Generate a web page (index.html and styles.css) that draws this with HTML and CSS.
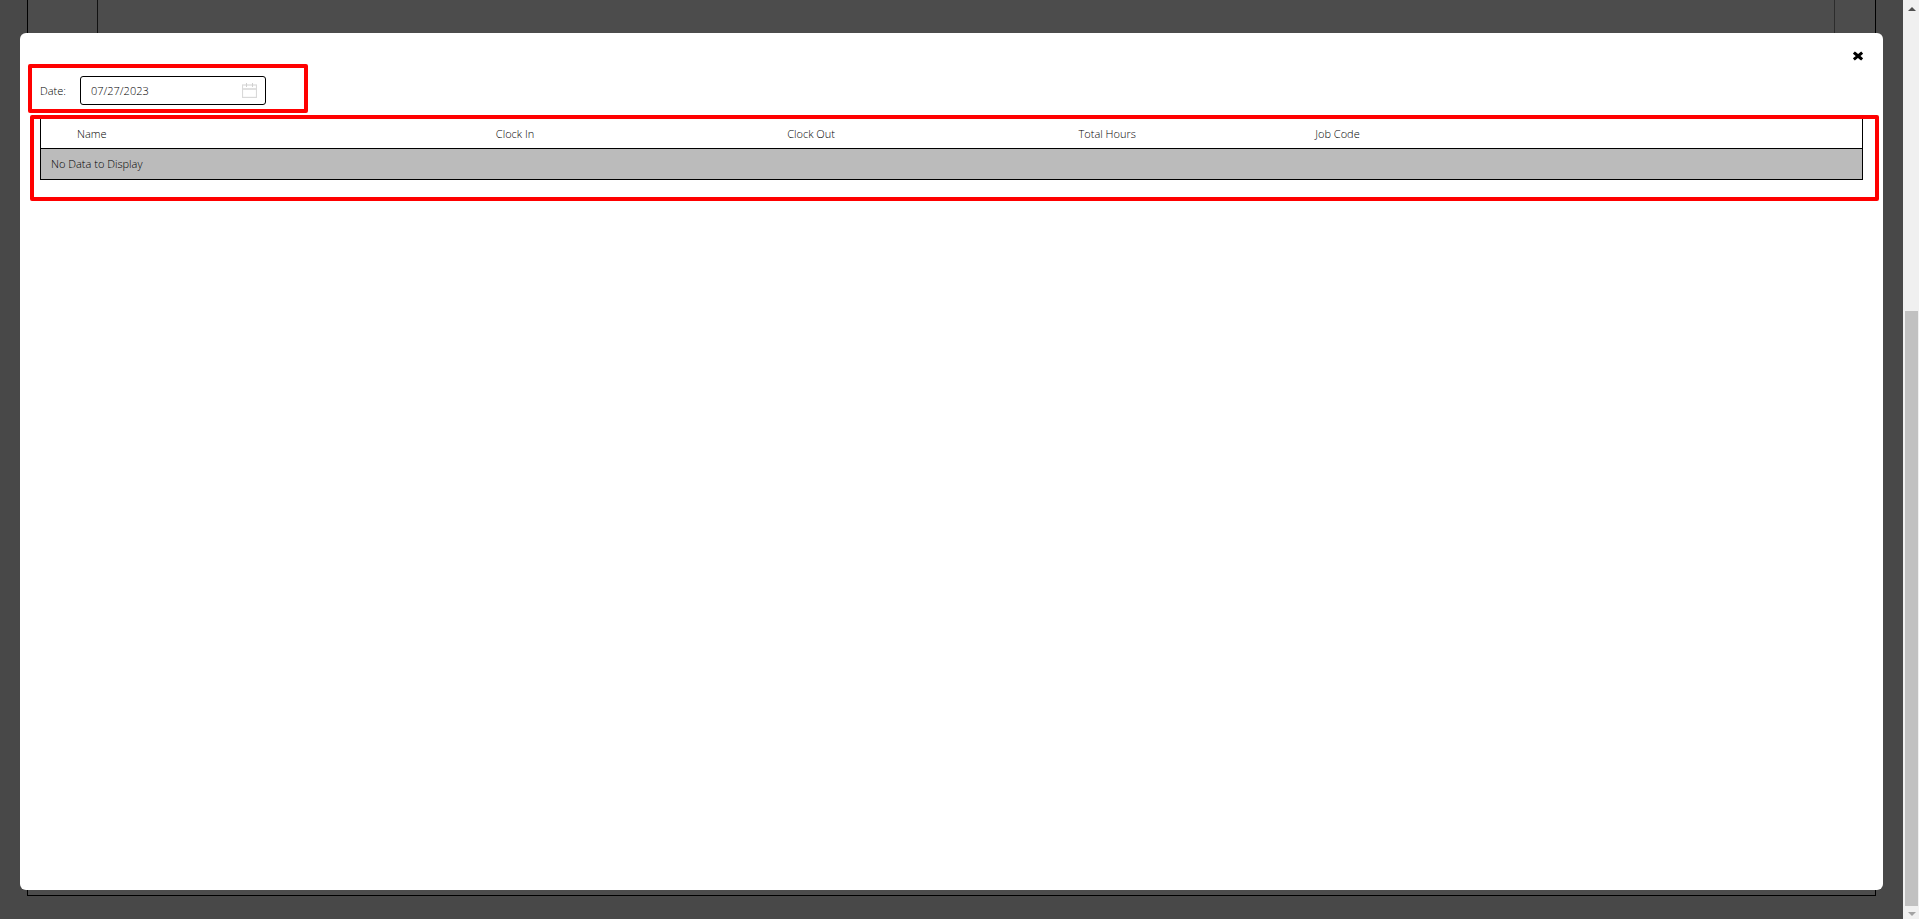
FILE: index.html
```html
<!DOCTYPE html>
<html lang="en">
<head>
  <meta charset="UTF-8">
  <title>Time Clock</title>
  <link rel="stylesheet" href="styles.css">
</head>
<body>
  <div class="page">
    <div class="panel">
      <div class="panel-column"></div>
    </div>

    <div class="modal" role="dialog" aria-label="Time Clock">
      <div class="modal-header">
        <button class="close-button" type="button" aria-label="Close">
          <svg viewBox="0 0 10 10" width="10" height="10">
            <path d="M2 2.5L8 7.5M8 2.5L2 7.5" fill="none" stroke="#000" stroke-width="3" stroke-linecap="square" />
          </svg>
        </button>
      </div>

      <div class="date-box">
        <label for="date">Date:</label>
        <div class="date-field">
          <input type="text" id="date" name="date" value="07/27/2023">
          <svg viewBox="0 0 15 15" width="15" height="15">
            <rect x="0.5" y="2" width="14" height="12.4" fill="none" stroke="#d9d9d9" stroke-width="1.2" />
            <path d="M0 6H15" stroke="#d9d9d9" stroke-width="1.6" />
            <path d="M4.5 0V4M10.5 0V4" stroke="#d0d0d0" />
          </svg>
        </div>
      </div>

      <div class="table-box">
        <table>
          <thead>
            <tr>
              <th class="col-select"></th>
              <th class="col-name">Name</th>
              <th class="col-clock">Clock In</th>
              <th class="col-clock">Clock Out</th>
              <th class="col-hours">Total Hours</th>
              <th>Job Code</th>
            </tr>
          </thead>
          <tbody>
            <tr>
              <td colspan="6">No Data to Display</td>
            </tr>
          </tbody>
        </table>
      </div>
    </div>
  </div>

  <div class="scrollbar">
    <div class="arrow arrow-up"></div>
    <div class="thumb"></div>
    <div class="arrow arrow-down"></div>
  </div>
</body>
</html>
```
FILE: styles.css
```css
* {
  box-sizing: border-box;
}

body {
  margin: 0;
  height: 100vh;
  display: flex;
  font-family: "Open Sans", sans-serif;
  font-size: 11px;
  font-weight: 300;
  line-height: 16px;
  color: #000;
  background-color: #484848;
  overflow: hidden;
}

.page {
  position: relative;
  flex: 1;
  display: flex;
  padding: 0 27px 23px;
}

.panel {
  flex: 1;
  display: flex;
  padding: 0 40px 20px 69px;
  border: 1px solid #000;
  border-top: none;
  background-color: #4c4c4c;
}

.panel-column {
  flex: 1;
  border-left: 1px solid #111;
  border-right: 1px solid #2c2c2c;
}

.modal {
  position: absolute;
  top: 33px;
  right: 20px;
  bottom: 29px;
  left: 20px;
  border-radius: 6px;
  background-color: #fff;
}

.modal-header {
  display: flex;
  justify-content: flex-end;
  padding: 18px 20px 3px;
}

.close-button {
  display: block;
  padding: 0;
  border: none;
  background: none;
  cursor: pointer;
}

.close-button svg {
  display: block;
}

.date-box {
  display: flex;
  align-items: center;
  width: 280px;
  margin-left: 8px;
  padding: 8px 8px 4px;
  border: 4px solid #f00;
  border-radius: 2px;
}

.date-box label {
  width: 40px;
}

.date-field {
  display: flex;
  align-items: center;
  width: 186px;
  height: 29px;
  padding: 0 8px 0 10px;
  border: 1px solid #000;
  border-radius: 3px;
}

.date-field input {
  flex: 1;
  min-width: 0;
  padding: 0;
  border: none;
  outline: none;
  font: inherit;
  color: #000;
  background: none;
}

.table-box {
  margin: 2px 4px 0 10px;
  padding: 0 12px 17px 6px;
  border: 4px solid #f00;
  border-radius: 2px;
}

table {
  width: 100%;
  table-layout: fixed;
  border: 1px solid #000;
  border-top: none;
  border-spacing: 0;
}

th,
td {
  padding: 0 10px;
  text-align: left;
  font-weight: 300;
}

th {
  height: 30px;
  border-bottom: 1px solid #000;
}

td {
  height: 30px;
  background-color: #bbb;
}

.col-select {
  width: 26px;
}

.col-name {
  width: 23%;
}

.col-clock {
  width: 16%;
}

.col-hours {
  width: 13%;
}

.scrollbar {
  display: flex;
  flex-direction: column;
  align-items: center;
  justify-content: space-between;
  width: 16px;
  padding: 7px 1px 3px 2px;
  background-color: #f0f0f0;
}

.thumb {
  width: 13px;
  height: 595px;
  margin: auto 0 6px;
  background-color: #c1c1c1;
}

.arrow {
  border-left: 4px solid transparent;
  border-right: 4px solid transparent;
}

.arrow-up {
  border-bottom: 4px solid #505050;
}

.arrow-down {
  border-top: 4px solid #a3a3a3;
}
```
